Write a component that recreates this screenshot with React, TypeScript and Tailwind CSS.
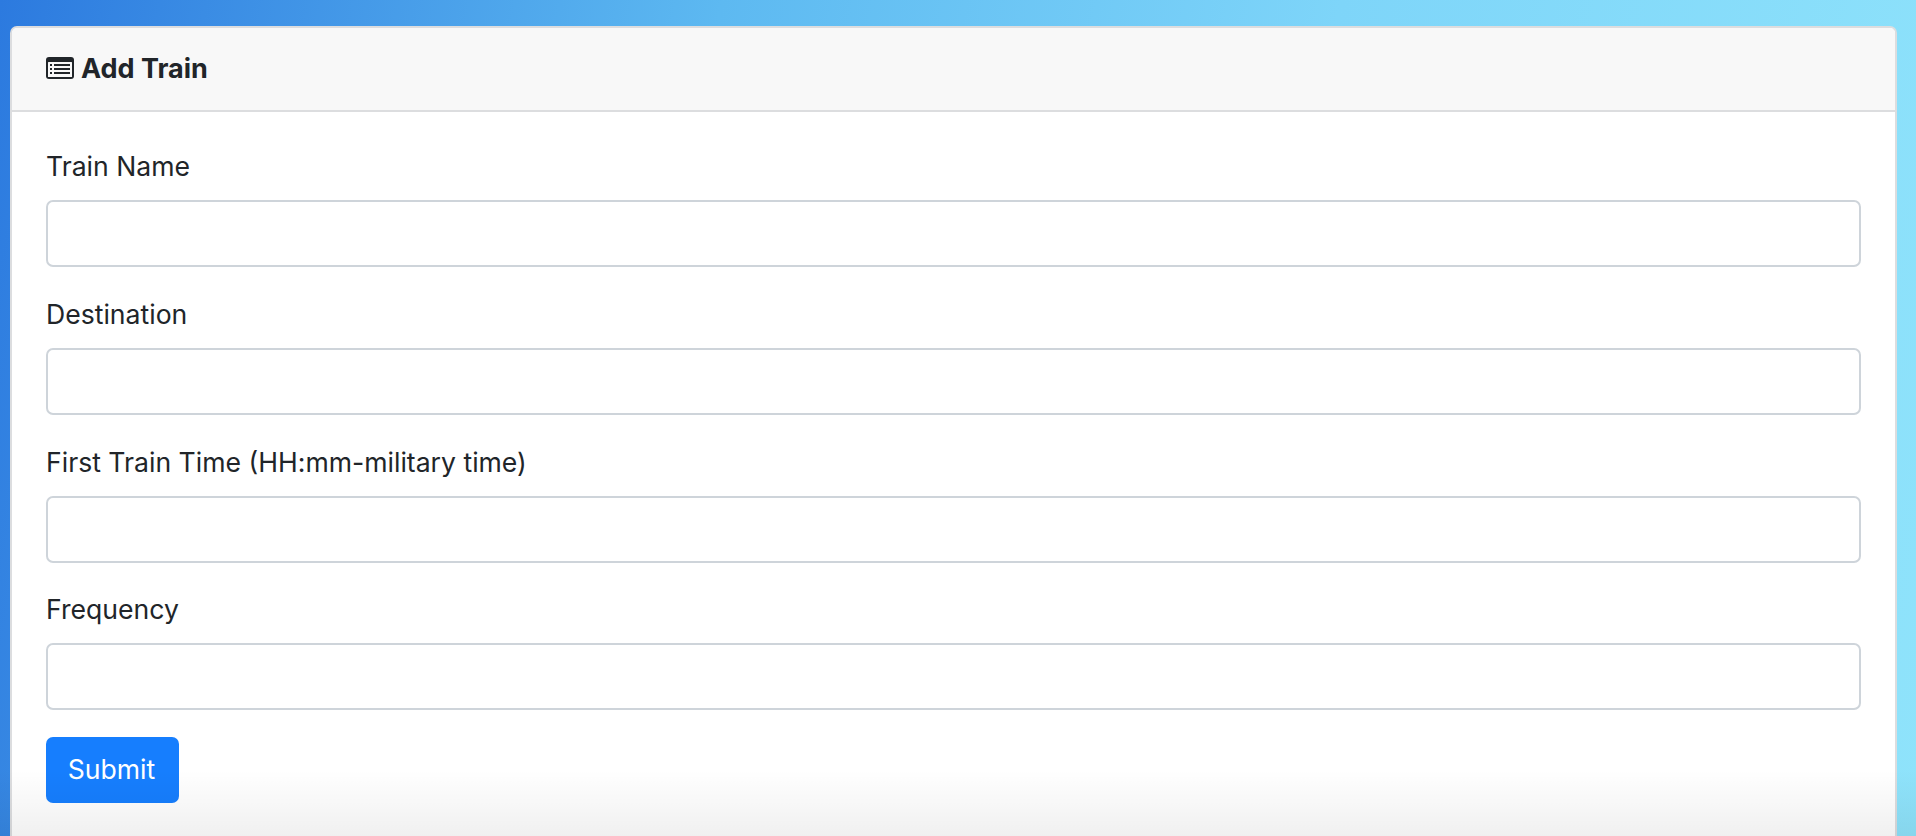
import React from "react";

const fields = ["Train Name", "Destination", "First Train Time (HH:mm-military time)", "Frequency"];

function ListIcon() {
  return (
    <svg viewBox="0 0 28 22" className="h-[22px] w-[28px] shrink-0">
      <rect x="0" y="0" width="28" height="22" rx="3" fill="#212529" />
      <rect x="2" y="5" width="24" height="15" rx="0.5" fill="#f8f8f8" />
      <rect x="4" y="7" width="2" height="2" fill="#212529" />
      <rect x="4" y="11" width="2" height="2" fill="#212529" />
      <rect x="4" y="15" width="2" height="2" fill="#212529" />
      <rect x="8" y="7" width="16" height="2" fill="#212529" />
      <rect x="8" y="11" width="16" height="2" fill="#212529" />
      <rect x="8" y="15" width="16" height="2" fill="#212529" />
    </svg>
  );
}

export default function App() {
  return (
    <div className="relative h-[836px] w-[1916px] overflow-hidden bg-[linear-gradient(100deg,#2c7adf_0%,#5db9f1_35%,#7ed5f9_65%,#8fe3fb_100%)] pl-[10px] pr-[19px] pt-[26px] font-['Inter',sans-serif] text-[#212529]">
      <div className="h-[830px] overflow-hidden rounded-[7px] border-2 border-b-0 border-[#dcdddf] bg-white">
        <div className="flex h-[84px] items-center gap-[7px] border-b-2 border-[#dcdddf] bg-[#f8f8f8] pb-[2px] pl-[34px]">
          <ListIcon />
          <h5 className="text-[27px] font-bold leading-none">Add Train</h5>
        </div>
        <form className="flex flex-col pl-[34px] pr-[34px] pt-[34px]">
          {fields.map((f, i) => (
            <div key={f} className={i === 2 ? "mb-[26px] flex flex-col gap-[12px]" : "mb-[27px] flex flex-col gap-[12px]"}>
              <label className="h-[42px] text-[26.6px] leading-[40px]">{f}</label>
              <input className="h-[67px] w-full rounded-[7px] border-2 border-[#ced4da] bg-white" />
            </div>
          ))}
          <button className="h-[66px] w-[133px] rounded-[7px] bg-[#167efe] pr-[2px] text-[26.6px] text-white">Submit</button>
        </form>
      </div>
      <div className="pointer-events-none absolute inset-x-0 bottom-0 h-[66px] bg-[linear-gradient(to_bottom,rgba(0,0,0,0),rgba(0,0,0,0.06))]" />
    </div>
  );
}
